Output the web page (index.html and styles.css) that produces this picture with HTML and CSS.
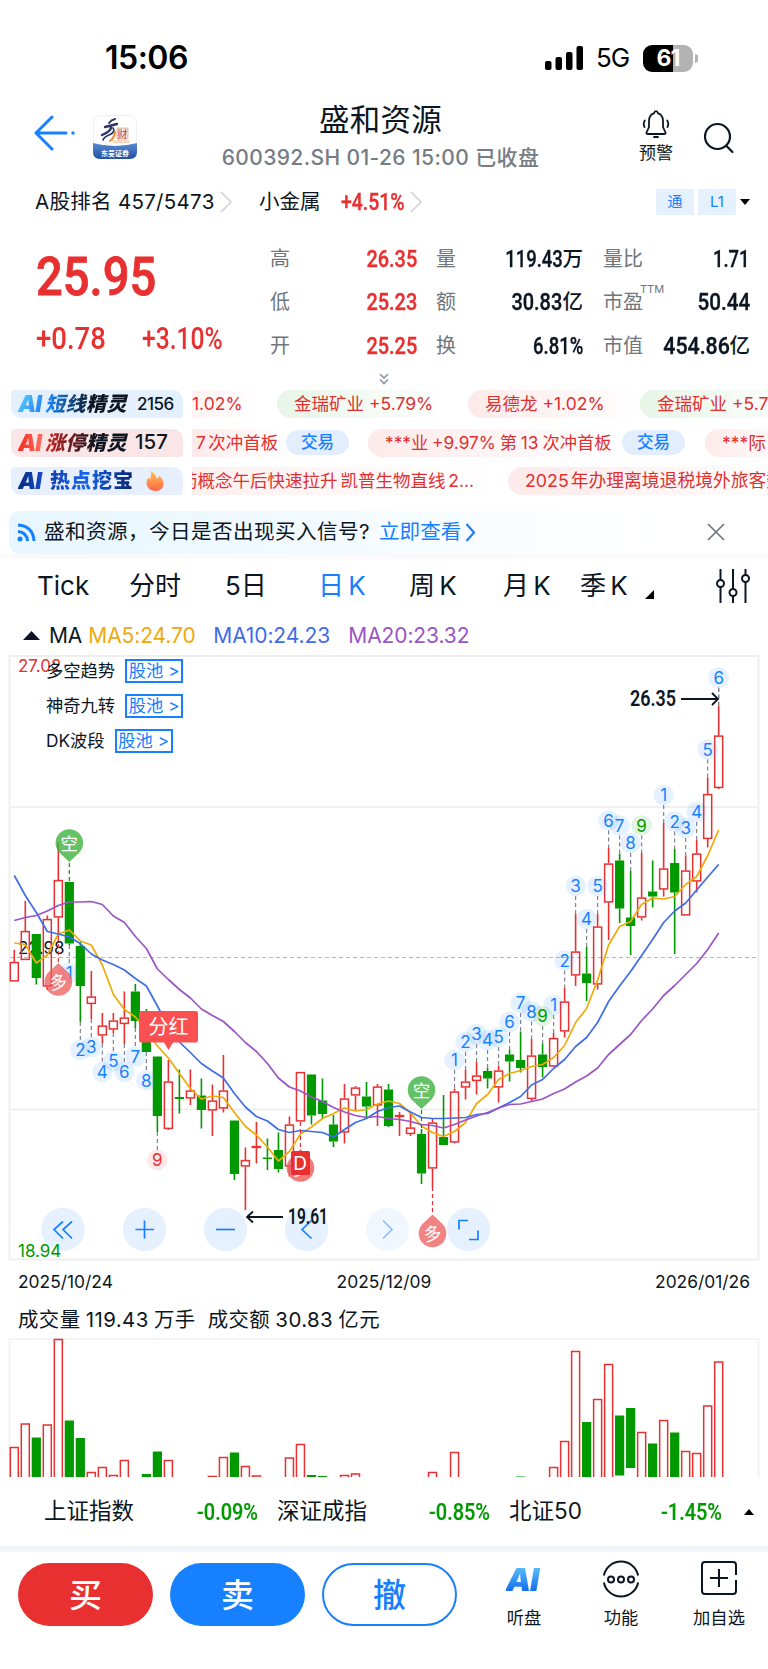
FILE: index.html
```html
<!DOCTYPE html>
<html lang="zh-CN">
<head>
  <meta charset="UTF-8">
  <title>盛和资源 600392.SH</title>
  <link rel="stylesheet" href="styles.css">
</head>
<body>
  <div class="status">
    <div class="clock">15:06</div>
    <div class="status-right">
      <svg width="38" height="24" viewBox="0 0 38 24"><rect x="0" y="15" width="6.5" height="9" rx="2"/><rect x="10.5" y="11" width="6.5" height="13" rx="2"/><rect x="21" y="6" width="6.5" height="18" rx="2"/><rect x="31.500" y="0" width="6.500" height="24" rx="2"/></svg>
      <span class="net">5G</span>
      <span class="battery">61</span>
      <span class="nub"></span>
    </div>
  </div>

  <header class="header">
    <svg class="back" width="42" height="36" viewBox="0 0 42 36" fill="none" stroke="#1780ff" stroke-width="3" stroke-linecap="round" stroke-linejoin="round"><path d="M18 2 L2 18 L18 34 M2 18 H32"/><circle cx="39" cy="18" r="1.7" fill="#1780ff" stroke="none"/></svg>
    <svg class="logo" width="44" height="44" viewBox="0 0 44 44">
      <defs><linearGradient id="lg" x1="0" y1="0" x2="0" y2="1"><stop offset="0" stop-color="#5b8ad2"/><stop offset="1" stop-color="#2250a4"/></linearGradient></defs>
      <rect x=".5" y=".5" width="43" height="43" rx="7" fill="#fff" stroke="#eef0f4"/>
      <path d="M0 28 Q22 34 44 28 V37 Q44 44 37 44 H7 Q0 44 0 37 Z" fill="url(#lg)"/>
      <g fill="none" stroke-linecap="round"><path d="M22 4 Q18 5 16 8" stroke="#2c3566" stroke-width="2"/><path d="M12 12 L24 9 M18 11 Q19 16 9 20" stroke="#2c3566" stroke-width="2.400"/><path d="M20 13 Q23 17 16 20 Q11 22 10 25" stroke="#2c3566" stroke-width="1.700"/><path d="M22 17 Q22 22 17 26" stroke="#f08a2c" stroke-width="2"/></g>
      <rect x="24" y="13" width="11" height="11" rx="1" fill="#f7e4e1" stroke="#d58a80" stroke-width=".6"/>
      <text x="29.500" y="22.500" font-size="10" text-anchor="middle" fill="#b8443a">财</text>
      <text x="28" y="28" font-size="3.500" text-anchor="middle" fill="#f08a2c">DONGWU</text>
      <text x="22" y="41" font-size="7" font-weight="700" text-anchor="middle" fill="#fff">东吴证券</text>
    </svg>
    <div class="title">
      <h1>盛和资源</h1>
      <div class="subtitle">600392.SH 01-26 15:00 已收盘</div>
    </div>
    <div class="alert">
      <svg width="28" height="28" viewBox="0 0 28 28" fill="none" stroke="#0c1622" stroke-width="1.800" stroke-linecap="round" stroke-linejoin="round"><path d="M14 1.200 Q12.500 1.200 12.200 3.200 Q7 5 7 11 V17 L4.500 22.500 Q4 24 5.500 24 H22.500 Q24 24 23.500 22.500 L21 17 V11 Q21 5 15.800 3.200 Q15.500 1.200 14 1.200 Z M12 27 H16 M2.800 10.500 Q.8 13.500 2.500 17 M25.200 10.500 Q27.200 13.500 25.500 17"/></svg>
      <span>预警</span>
    </div>
    <svg class="search" width="32" height="32" viewBox="0 0 32 32" fill="none" stroke="#0c1622" stroke-width="2.200" stroke-linecap="round"><circle cx="14.500" cy="14.500" r="12.500"/><path d="M23.500 24 L29.500 30"/></svg>
  </header>

  <div class="rank">
    <span class="rank-a">A股排名 457/5473</span>
    <svg class="chev" width="12" height="22" viewBox="0 0 12 22"><path d="M1 1 L11 11 L1 21"/></svg>
    <span class="sector">小金属</span>
    <span class="sector-pct"><b class="din d80">+4.51%</b></span>
    <svg class="chev" width="12" height="22" viewBox="0 0 12 22"><path d="M1 1 L11 11 L1 21"/></svg>
    <span class="tag">通</span>
    <span class="tag">L1</span>
    <svg width="10" height="6" viewBox="0 0 10 6"><path d="M0 0 H10 L5 6 Z"/></svg>
  </div>

  <section class="quote">
    <div class="price">
      <div class="last"><b class="din d88">25.95</b></div>
      <div class="change"><span><b class="din d85">+0.78</b></span><span><b class="din d76">+3.10%</b></span></div>
    </div>
    <div class="stats">
      <label>高</label><span class="up"><b class="din">26.35</b></span>
      <label>量</label><span><b class="din d76">119.43</b>万</span>
      <label>量比</label><span><b class="din d76">1.71</b></span>
      <label>低</label><span class="up"><b class="din">25.23</b></span>
      <label>额</label><span><b class="din">30.83</b>亿</span>
      <label>市盈<sup>TTM</sup></label><span><b class="din d85">50.44</b></span>
      <label>开</label><span class="up"><b class="din">25.25</b></span>
      <label>换</label><span><b class="din d76">6.81%</b></span>
      <label>市值</label><span><b class="din d88">454.86</b>亿</span>
    </div>
  </section>
  <div class="expand"><svg width="10" height="12" viewBox="0 0 10 12" fill="none" stroke="#8d96a3" stroke-width="1.600"><path d="M1 1 L5 5 L9 1 M1 6.500 L5 10.500 L9 6.500"/></svg></div>

  <section class="feeds">
    <div class="feed">
      <div class="badge blue"><i class="ai">AI</i><i class="name">短线精灵</i><em class="small">2156</em></div>
      <div class="ticker"><div class="track t1">
        <span class="chip red cut">1.02%</span>
        <span class="chip green">金瑞矿业 +5.79%</span>
        <span class="chip red yi">易德龙 +1.02%</span>
        <span class="chip green">金瑞矿业 +5.79%</span>
      </div></div>
    </div>
    <div class="feed">
      <div class="badge rose"><i class="ai">AI</i><i class="name">涨停精灵</i><em>157</em></div>
      <div class="ticker"><div class="track t2">
        <span class="plain">7 次冲首板</span><span class="trade">交易</span>
        <span class="chip red long">***业 +9.97% 第 13 次冲首板</span><span class="trade">交易</span>
        <span class="chip red last-chip">***际</span>
      </div></div>
    </div>
    <div class="feed">
      <div class="badge navy"><i class="ai">AI</i><i class="name">热点挖宝</i>
        <svg class="fire" width="18" height="20" viewBox="0 0 18 20"><defs><linearGradient id="fg" x1="0" y1="0" x2="0" y2="1"><stop offset="0" stop-color="#ffc552"/><stop offset="1" stop-color="#ff6548"/></linearGradient></defs><path d="M5 0 Q9 2 11 8 Q12 6 13.500 5 Q18 9 17.500 14 Q16 20 9 20 Q1 19 .5 12 Q.5 9 2.500 6.500 L4 8.500 Q5.500 4 5 0Z" fill="url(#fg)"/></svg>
      </div>
      <div class="ticker"><div class="track t3">
        <span class="plain">药概念午后快速拉升 凯普生物直线 2...</span>
        <span class="chip red policy">2025 年办理离境退税境外旅客数量</span>
      </div></div>
    </div>
  </section>

  <div class="notice">
    <svg width="19" height="19" viewBox="0 0 19 19" fill="none" stroke="#1780ff" stroke-width="3"><circle cx="3" cy="16" r="2.500" fill="#1780ff" stroke="none"/><path d="M1 8.500 Q10 9.500 10.500 18 M1 2 Q16 3 17 18"/></svg>
    <span>盛和资源，今日是否出现买入信号?</span>
    <a>立即查看</a>
    <svg width="11" height="19" viewBox="0 0 11 19" fill="none" stroke="#1780ff" stroke-width="2.200"><path d="M1.500 1 L9 9.500 L1.500 18"/></svg>
    <svg class="close" width="18" height="18" viewBox="0 0 18 18" stroke="#6e747c" stroke-width="1.700"><path d="M1 1 L17 17 M17 1 L1 17"/></svg>
  </div>

  <nav class="tabs">
    <span>Tick</span><span>分时</span><span>5日</span><span class="active">日 K</span><span>周 K</span><span>月 K</span><span>季 K</span>
    <svg class="corner" width="9" height="9" viewBox="0 0 9 9"><path d="M9 0 V9 H0 Z"/></svg>
    <svg class="sliders" width="34" height="34" viewBox="0 0 34 34" fill="none" stroke="#0c1622" stroke-width="2"><path d="M4.500 0 V11 M4.500 18 V34 M17 0 V20 M17 27 V34 M29.500 0 V6 M29.500 13 V34"/><circle cx="4.500" cy="14.500" r="3.500"/><circle cx="17" cy="23.500" r="3.500"/><circle cx="29.500" cy="9.500" r="3.500"/></svg>
  </nav>

  <div class="ma">
    <svg width="17" height="9" viewBox="0 0 17 9"><path d="M0 9 L8.500 0 L17 9 Z" fill="#0c1622"/></svg>
    <span>MA</span><span class="ma5">MA5:24.70</span><span class="ma10">MA10:24.23</span><span class="ma20">MA20:23.32</span>
  </div>

  <div class="chart">
    <svg id="kline" width="768" height="612" viewBox="0 652 768 612"></svg>
    <div class="pools">
      <div>多空趋势<a>股池 &gt;</a></div>
      <div>神奇九转<a>股池 &gt;</a></div>
      <div>DK波段<a>股池 &gt;</a></div>
    </div>
  </div>
  <div class="dates"><span>2025/10/24</span><span>2025/12/09</span><span>2026/01/26</span></div>

  <div class="volume-label"><span>成交量 119.43 万手</span><span>成交额 30.83 亿元</span></div>
  <svg id="volume" class="volume" width="768" height="139" viewBox="0 1337.500 768 139"></svg>

  <div class="indices">
    <span>上证指数</span><b class="din">-0.09%</b>
    <span>深证成指</span><b class="din">-0.85%</b>
    <span>北证50</span><b class="din">-1.45%</b>
    <svg width="10" height="6" viewBox="0 0 10 6"><path d="M0 6 L5 0 L10 6 Z"/></svg>
  </div>

  <footer class="actions">
    <button class="btn buy">买</button>
    <button class="btn sell">卖</button>
    <button class="btn cancel">撤</button>
    <div class="tool listen"><i>AI</i><span>听盘</span></div>
    <div class="tool func">
      <svg width="38" height="38" viewBox="0 0 38 38" fill="none" stroke="#0c1622" stroke-width="2"><path d="M1.850 15.500 A17.500 17.500 0 0 1 36.150 15.500 M1.850 22.500 A17.500 17.500 0 0 0 36.150 22.500"/><circle cx="9" cy="19.500" r="3"/><circle cx="19" cy="19.500" r="3"/><circle cx="29" cy="19.500" r="3"/></svg>
      <span>功能</span>
    </div>
    <div class="tool add">
      <svg width="36" height="36" viewBox="0 0 36 36" fill="none" stroke="#0c1622" stroke-width="2"><path d="M35 15 V5 Q35 2 32 2 H4 Q1 2 1 5 V31 Q1 34 4 34 H32 Q35 34 35 31 V20 M18 9 V27 M9 18 H27"/></svg>
      <span>加自选</span>
    </div>
  </footer>
  <script src="chart.js"></script>
</body>
</html>
```
FILE: styles.css
```css
* {
  box-sizing: border-box;
}

body {
  margin: 0;
  width: 768px;
  height: 1669px;
  overflow: hidden;
  background: #fff;
  color: #0c1622;
  font-family: Inter, "Noto Sans CJK SC", sans-serif;
  font-size: 20px;
  line-height: 1;
  white-space: nowrap;
}

svg {
  display: block;
  flex: none;
}

h1 {
  margin: 0;
}

/* narrow figures for prices */
.din {
  display: inline-block;
  font-family: Roboto, sans-serif;
  font-weight: 500;
  font-size: 24px;
  transform: scaleX(.83);
  transform-origin: right center;
  -webkit-text-stroke: .35px;
}
.d76 { transform: scaleX(.77); }
.d80 { transform: scaleX(.81); }
.d85 { transform: scaleX(.86); }
.d88 { transform: scaleX(.89); }

/* status bar */
.status {
  height: 101px;
  padding: 15px 70px 0 105px;
  display: flex;
  justify-content: space-between;
  align-items: center;
  color: #000;
}
.clock {
  font-size: 32px;
  font-weight: 600;
  letter-spacing: -.5px;
}
.status-right {
  display: flex;
  align-items: center;
}
.net {
  width: 46px;
  padding-left: 13px;
  font-size: 26px;
  letter-spacing: -1px;
}
.battery {
  margin-left: 14px;
  width: 50px;
  height: 27px;
  border-radius: 9px;
  background: linear-gradient(90deg, #000 60%, #b3b3b3 60%);
  color: #fff;
  font-size: 23px;
  font-weight: 700;
  line-height: 27px;
  text-align: center;
  letter-spacing: -1px;
}
.nub {
  margin-left: 2px;
  width: 3px;
  height: 9px;
  border-radius: 0 4px 4px 0;
  background: #b3b3b3;
}

/* header */
.header {
  height: 78px;
  display: flex;
  align-items: flex-start;
}
.back {
  margin: 14px 0 0 34px;
}
.logo {
  margin: 14px 0 0 17px;
  width: 44px;
}
.title {
  width: 487px;
  padding-top: 2px;
  text-align: center;
}
.title h1 {
  font-size: 30.5px;
  font-weight: 400;
  line-height: 34px;
  letter-spacing: .3px;
}
.subtitle {
  margin-top: 10px;
  color: #767c83;
  font-size: 21px;
  line-height: 21px;
  font-weight: 500;
  letter-spacing: .4px;
}
.alert {
  width: 60px;
  margin: 9px 0 0 2px;
  display: flex;
  flex-direction: column;
  align-items: center;
  font-size: 17px;
}
.alert span {
  margin-top: 7px;
}
.search {
  margin: 21px 0 0 17px;
}

/* rank row */
.rank {
  height: 46px;
  display: flex;
  align-items: center;
}
.rank-a {
  width: 185px;
  margin-left: 35px;
  font-size: 20.5px;
  letter-spacing: .3px;
}
.chev path {
  fill: none;
  stroke: #d0d3d8;
  stroke-width: 1.6px;
}
.sector {
  margin-left: 27px;
  width: 82px;
  font-size: 20.5px;
}
.sector-pct {
  width: 69px;
  color: #e83030;
}
.sector-pct .din,
.price .din {
  transform-origin: left center;
}
.rank .chev + .tag {
  margin-left: 234px;
}
.tag {
  width: 38px;
  height: 26px;
  margin-right: 4px;
  background: #e6f1fe;
  color: #1780ff;
  font-size: 15px;
  line-height: 26px;
  text-align: center;
}

/* quote */
.quote {
  height: 144px;
  display: flex;
}
.price {
  width: 270px;
  padding: 26px 0 0 36px;
  color: #e83030;
}
.last .din {
  font-size: 53px;
  line-height: 52px;
  -webkit-text-stroke: .8px;
}
.change {
  display: flex;
  margin-top: 19px;
}
.change span {
  width: 106px;
}
.change .din {
  font-size: 32px;
  line-height: 32px;
  -webkit-text-stroke: 0;
}
.stats {
  width: 480px;
  padding-top: 12px;
  display: grid;
  grid-template-columns: 60px 87px 66px 100px 40px 127px;
  grid-template-rows: repeat(3, 43.5px);
  align-items: center;
}
.stats label {
  color: #70767d;
  font-size: 20px;
}
.stats label:nth-of-type(3n+2) {
  padding-left: 19px;
}
.stats label:nth-of-type(3n) {
  padding-left: 20px;
}
.stats span {
  display: flex;
  justify-content: flex-end;
  align-items: center;
  font-size: 20.5px;
  font-weight: 500;
}
.stats .up {
  color: #e83030;
}
.stats sup {
  position: absolute;
  margin-top: -8px;
  margin-left: -3px;
  font-size: 11px;
}
.expand {
  height: 21px;
  padding: 4px 0 0 379px;
}

/* AI feeds */
.feed {
  height: 38.5px;
  display: flex;
}
.badge {
  width: 172px;
  height: 28px;
  margin-left: 11px;
  padding-left: 7px;
  display: flex;
  align-items: center;
  border-radius: 4px 10px 4px 10px;
  background: #e5f0fe;
}
.badge i {
  font-weight: 900;
  font-size: 20px;
  line-height: 26px;
  color: transparent;
  -webkit-background-clip: text;
  background-clip: text;
}
.badge .ai {
  width: 27px;
  font-size: 23px;
  letter-spacing: -1px;
  background-image: linear-gradient(120deg, #60d8ff, #1670f0);
}
.badge .name {
  width: 86px;
  letter-spacing: .5px;
  background-image: linear-gradient(90deg, #1e8dff, #0b1420 55%);
}
.badge em {
  margin-left: 4px;
  font-style: normal;
  font-size: 20.5px;
  font-weight: 500;
}
.badge .small {
  margin-left: 6px;
  font-size: 17px;
  letter-spacing: -.5px;
}
.rose {
  background: #fae6e7;
}
.rose .ai {
  background-image: linear-gradient(90deg, #f52d20, #ff7468);
}
.rose .name {
  background-image: linear-gradient(90deg, #d52824, #0b1420 60%);
}
.navy {
  background: #e7eefc;
}
.navy .ai {
  width: 26px;
  margin-right: 6px;
  background-image: linear-gradient(90deg, #082b80, #174dcc);
}
.navy .name {
  font-style: normal;
  letter-spacing: 1px;
  background-image: linear-gradient(90deg, #123eae, #1765f0 40%, #061f67);
}
.fire {
  margin-left: 10px;
}
.ticker {
  width: 576px;
  height: 28px;
  margin-left: 9px;
  overflow: hidden;
}
.track {
  display: flex;
  align-items: center;
  height: 28px;
  color: #df3030;
  font-size: 17.5px;
}
.chip,
.plain {
  flex: none;
  height: 28px;
  line-height: 28px;
}
.chip {
  border-radius: 14px 0 0 14px;
  padding-left: 17px;
}
.red,
.plain {
  background: linear-gradient(90deg, #fdeaea, #fff);
}
.green {
  width: 191px;
  background: linear-gradient(90deg, #e7f5e7, #fff 90%);
}
.cut {
  width: 85px;
  padding-left: 0;
  border-radius: 0;
  background: linear-gradient(90deg, #fff3f3, #fff 80%);
}
.yi {
  width: 172px;
}
.t2 .plain {
  width: 94px;
  padding-left: 4px;
  word-spacing: -2.5px;
}
.trade {
  flex: none;
  width: 63px;
  height: 25px;
  border-radius: 13px;
  background: #e2eefd;
  color: #1780ff;
  font-size: 16.5px;
  font-weight: 500;
  line-height: 25px;
  text-align: center;
}
.long {
  width: 254px;
  margin-left: 19px;
  font-size: 17.3px;
  word-spacing: -1px;
}
.last-chip {
  margin-left: 20px;
  width: 90px;
}
.t3 .plain {
  width: 317px;
  margin-left: -12px;
  background: linear-gradient(90deg, #ffefef, #fff);
  word-spacing: -2px;
}
.policy {
  margin-left: 11px;
  width: 290px;
  font-size: 17.8px;
  word-spacing: -3px;
}

/* notice */
.notice {
  height: 43px;
  margin: 5px 0 0 9px;
  padding-left: 8px;
  display: flex;
  align-items: center;
  border-radius: 11px 0 0 11px;
  background: linear-gradient(90deg, #e7f6ff, #f4fbff 45%, #fff 85%);
  font-size: 20.6px;
}
.notice span {
  width: 335px;
  margin-left: 8px;
  letter-spacing: .4px;
}
.notice a {
  width: 86px;
  color: #1780ff;
}
.notice .close {
  margin-left: 231px;
}

/* period tabs */
.tabs {
  height: 60px;
  border-top: 5px solid #fafafa;
  padding: 0 0 0 37px;
  display: grid;
  grid-template-columns: 92px 96px 93px 91px 94px 77px 65px 71px 34px;
  align-items: center;
  font-size: 26px;
  word-spacing: -3px;
}
.tabs .active {
  color: #1780ff;
}
.corner {
  margin-top: 17px;
}

.ma {
  height: 38px;
  padding: 6px 0 0 23px;
  display: flex;
  align-items: center;
  font-size: 21px;
  letter-spacing: -.1px;
}
.ma span { margin-left: 9px; }
.ma .ma5 { width: 107px; margin-left: 6px; color: #efa90a; }
.ma .ma10 { width: 117px; margin-left: 18px; color: #3f6ce8; }
.ma .ma20 { margin-left: 18px; color: #9955c4; }

/* candles */
.chart {
  position: relative;
  height: 612px;
}
.chart text {
  font-family: Inter, "Noto Sans CJK SC", sans-serif;
}
.chart .din-text {
  font-family: Roboto, sans-serif;
  font-weight: 600;
}
.pools {
  position: absolute;
  top: 7px;
  left: 46px;
  font-size: 17.3px;
}
.pools div {
  height: 35px;
  display: flex;
  align-items: flex-start;
  line-height: 24px;
}
.pools a {
  width: 58px;
  height: 24px;
  margin-left: 10px;
  border: 2px solid #1780ff;
  color: #1780ff;
  line-height: 20px;
  text-align: center;
}

.dates {
  height: 36px;
  padding: 0 18px;
  display: flex;
  justify-content: space-between;
  align-items: center;
  font-size: 17.4px;
}
.volume-label {
  height: 38px;
  padding: 3px 18px 0;
  display: flex;
  gap: 12px;
  align-items: center;
  font-size: 20.4px;
  letter-spacing: .45px;
  word-spacing: -1px;
}

/* index strip */
.indices {
  height: 69px;
  padding: 1px 0 0 44px;
  display: grid;
  grid-template-columns: 130px 84px 149px 83px 150px 82px 41px;
  align-items: center;
  font-size: 22.5px;
}
.indices span:nth-of-type(n+2) {
  padding-left: 19px;
}
.indices .din {
  color: #009a00;
  text-align: right;
  -webkit-text-stroke: .2px;
}
.indices svg {
  margin-left: 22px;
}

/* bottom bar */
.actions {
  height: 124px;
  border-top: 6px solid #f3f5fb;
  padding: 11px 0 0 18px;
  display: flex;
  align-items: flex-start;
}
.btn {
  width: 135px;
  height: 63px;
  margin: 0 17px 0 0;
  padding: 0 0 3px;
  border: none;
  border-radius: 32px;
  color: #fff;
  font-family: inherit;
  font-size: 33px;
  font-weight: 500;
}
.buy { background: #e83030; }
.sell { background: #1780ff; }
.cancel {
  background: #fff;
  border: 2px solid #1780ff;
  color: #1780ff;
}
.tool {
  height: 71px;
  display: flex;
  flex-direction: column;
  align-items: center;
  justify-content: space-between;
  width: 98px;
  margin-top: -3px;
  padding-bottom: 4px;
  font-size: 17.3px;
}
.listen {
  padding-left: 2px;
}
.tool i {
  padding-right: 4px;
  margin-top: 3px;
  font-size: 32px;
  font-weight: 900;
  letter-spacing: -1px;
  line-height: 34px;
  color: transparent;
  background: linear-gradient(#64ccff, #1671ee 80%);
  -webkit-background-clip: text;
  background-clip: text;
}
```
FILE: chart.js
```javascript
const RED = '#e83030', GREEN = '#009a00', BLUE = '#1780ff';
const x = i => 14.3 + i * 11.006;

// [color, high, body top, body bottom, low] in chart units
const candles = [
  ['r',950,962,981.5,981.5],['r',901,931,960,960],['g',934,934,978,984.5],['r',915.5,919,986.5,990],['r',842,880,917.5,937],
  ['g',882,882,943.5,945],['g',942,946,986,1022],['r',971,996.5,1004,1019],['r',1013,1025.5,1035.5,1043.5],['r',1013,1020.5,1029.5,1033],
  ['r',991.5,1017.5,1024,1044],['g',984,991.5,1021,1028],['g',1009,1013,1052,1052],['g',1056.5,1056.5,1116,1132],['r',1060,1081.5,1129,1130],
  ['g',1069.5,1097,1099,1113.5],['r',1069.5,1090.5,1098.5,1105],['g',1078.5,1095.5,1110,1128.5],['r',1084.5,1100.5,1110.5,1136],['r',1055,1090.5,1108.5,1112.5],
  ['g',1120.5,1120.5,1174,1180],['r',1147.5,1160,1166.5,1210],['r',1122,1146,1148,1163.5],['g',1138.5,1157.5,1159,1170],['g',1132.5,1150,1169,1172.5],
  ['r',1116.5,1124.5,1166.5,1176.5],['r',1072,1072,1121.5,1121.5],['g',1074.5,1074.5,1115.5,1124.5],['g',1078.5,1100.5,1114,1118.5],['g',1115,1124.5,1141.5,1147],
  ['r',1084,1098.5,1132.5,1143.5],['r',1086,1087.5,1095.5,1110.5],['g',1082,1096.5,1106.5,1117.5],['r',1084,1086.5,1105.5,1126],['g',1084,1089.5,1126,1127],
  ['r',1112,1115,1116,1136],['r',1113,1127.5,1134,1136],['g',1129,1134,1173.5,1184],['r',1119,1122.5,1168.5,1187],['g',1095,1137,1145,1145],
  ['r',1088.5,1091.5,1142.5,1143.5],['r',1069.5,1081.5,1087.5,1099.5],['r',1061.5,1075.5,1081,1094.5],['g',1067.5,1071,1078.5,1088.5],['r',1065.5,1070.5,1087.5,1102.5],
  ['g',1050,1054.5,1061.5,1081.5],['g',1031.5,1060,1068,1072.5],['r',1039,1055.5,1099,1101],['g',1043.5,1054.5,1067,1077.5],['r',1033,1038,1066.5,1067],
  ['r',988,1001.5,1031.5,1037.5],['r',914,951.5,975.5,986],['g',946.5,973.5,983,1001],['r',914,926.5,984.5,989.5],['r',848,863.5,902.5,940],
  ['g',853.5,860.5,908.5,923],['g',870.5,917.5,926,955],['r',853,897.5,917.5,920.5],['g',860.5,891.5,896.5,907.5],['r',823,868.5,889.5,896.5],
  ['g',849,863,892.5,954],['r',855.5,870.5,915.5,915.5],['r',840,853.5,881.5,892.5],['r',777.5,794,839,847.5],['r',705.5,735.5,788,789]
];

const ma5 = [943,944.5,963,955,934,930,941,945,965,994.5,1009.5,1017,1030,1046,1058,1073.5,1088.5,1099,1096,1097.5,1112.5,1126.5,1135,1147,1161,1151.5,1134,1127,1118.5,1113.5,1108,1111,1109.5,1104,1101,1103.5,1113,1126,1132.5,1136.5,1131.5,1122.5,1103.5,1094.5,1079.5,1073.5,1070.5,1066.5,1064.5,1057.5,1045.5,1022.5,1008.5,980,945,926.5,921.5,904.5,898,899,896.5,884.5,876.5,855.5,830];
const ma10 = [875.5,895.5,912.5,931.5,934,937,943.5,954,960,964.5,970,978.5,986,1006,1027,1042,1052.5,1063.5,1071,1078,1093.5,1107,1116.5,1121,1129.5,1132.5,1130.5,1131.5,1132.5,1137,1129.5,1122.5,1118.5,1111.5,1107.5,1106,1112,1117.5,1118.5,1118.5,1118,1117.5,1114.5,1113.5,1108,1102.5,1096.5,1085,1079.5,1068.5,1059.5,1046.5,1037.5,1022.5,1001.5,986,971.5,955.5,939.5,922.5,911,903,890,877,864.5];
const ma20 = [920.5,917.5,915.5,911,905.5,902,902,901.5,904.5,916,922.5,936.5,948.5,969,979.5,989.5,998,1009,1015.5,1021.5,1031.5,1042.5,1051.5,1063.5,1078,1087,1091,1097,1101.5,1107.5,1112,1115.5,1117.5,1116.5,1118.5,1119.5,1121.5,1124.5,1125.5,1128,1124.5,1120,1116,1112.5,1108,1104.5,1104,1101.5,1099,1093.5,1089,1082,1076,1068,1054.5,1044.5,1034.5,1020.5,1009,995.5,985.5,974.5,963.5,949.5,933];

// nine-turn counters: [index, count, y]
const turns = [[5,1,973],[6,2,1050],[7,3,1047],[8,4,1072],[9,5,1061],[10,6,1072],[11,7,1056.5],[12,8,1080.5],[13,9,1160],
  [40,1,1060],[41,2,1042],[42,3,1034],[43,4,1040],[44,5,1037],[45,6,1022],[46,7,1003],[47,8,1011.5],[48,9,1016],[49,1,1005],
  [50,2,960.5],[51,3,886],[52,4,919],[53,5,886],[54,6,820.5],[55,7,825.5],[56,8,843],[57,9,825.5],
  [59,1,795],[60,2,821.5],[61,3,828],[62,4,812],[63,5,749.5],[64,6,677.5]];

// [index, top of the bar, color]
const volumes = [[0,1447],[1,1423.5],[2,1437,'g'],[3,1424.5],[4,1339],[5,1420,'g'],[6,1437.5,'g'],[7,1472],[8,1467],[9,1475],[10,1460],[12,1473.5,'g'],[13,1451,'g'],[14,1460],
  [18,1476],[19,1457],[20,1452,'g'],[21,1466],[22,1475.5],[25,1457.5],[26,1444],[27,1474.5,'g'],[28,1475.5,'g'],[30,1475],[31,1473.5],[38,1472],[40,1452],[46,1476,'g'],
  [49,1467],[50,1441],[51,1351],[52,1421.5,'g'],[53,1399],[54,1364],[55,1415,'g'],[56,1407.5,'g'],[57,1432],[58,1443,'g'],[59,1420],[60,1432,'g'],[61,1451],[62,1453],[63,1405.5],[64,1361.5]];

const text = (tx, y, s, size, color, extra = '') =>
  `<text x="${tx}" y="${y}" font-size="${size}" fill="${color}" ${extra}>${s}</text>`;
const dash = (cx, y1, y2, color = '#7d8490') =>
  `<path d="M${cx} ${y1} V${y2}" stroke="${color}" stroke-width="1.2" stroke-dasharray="4 3"/>`;
const line = (points, color) =>
  `<polyline points="${points.map((y, i) => x(i).toFixed(1) + ',' + y).join(' ')}" fill="none" stroke="${color}" stroke-width="1.7" stroke-linejoin="round"/>`;

let out = `<rect x="9.5" y="656" width="749" height="603.5" fill="none" stroke="#efefef" stroke-width="2"/>
  <path d="M10 807 H758 M10 1109.5 H758" stroke="#ebebeb" stroke-width="1.5"/>
  <path d="M10 957.5 H758" stroke="#b9b9b9" stroke-dasharray="4 3"/>`;
out += text(18, 672, '27.02', 17, RED);
out += text(18, 954, '22.98', 17, '#0c1622');

// zoom and scroll buttons
const glyphs = [
  [63, 'M63 -8 L54 0 L63 9 M72 -8 L63 0 L72 9'],
  [144.5, 'M135.5 0 H154 M144.5 -9 V9'],
  [225.5, 'M216 0 H235'],
  [306.5, 'M311.5 -9 L302 0 L311.5 9'],
  [387.5, 'M383 -9 L392 0 L383 9'],
  [468.5, 'M459 0 V-9 H468 M469 10 H478 V1']
];
glyphs.forEach(([cx, d], i) => {
  out += `<g opacity="${i === 4 ? .5 : 1}"><circle cx="${cx}" cy="1229.5" r="21.7" fill="#e5f1fe"/><path transform="translate(0 1229.5)" d="${d}" fill="none" stroke="${BLUE}" stroke-width="1.7"/></g>`;
});
out += text(18, 1256.5, '18.94', 17, GREEN);

candles.forEach(([c, high, top, bottom, low], i) => {
  const color = c === 'r' ? RED : GREEN;
  out += `<path d="M${x(i)} ${high} V${top} M${x(i)} ${bottom} V${low}" stroke="${color}" stroke-width="1.6"/>`;
  out += c === 'r'
    ? `<rect x="${x(i) - 4}" y="${top + .6}" width="8" height="${Math.max(bottom - top - 1.2, .8)}" fill="none" stroke="${RED}" stroke-width="1.5"/>`
    : `<rect x="${x(i) - 4.6}" y="${top}" width="9.2" height="${bottom - top}" fill="${GREEN}"/>`;
});
out += dash(x(64), 688, 705) + line(ma5, '#efaa08') + line(ma10, '#3f6ce8') + line(ma20, '#9955c4');

turns.forEach(([i, n, y]) => {
  const color = n < 9 ? BLUE : i < 20 ? RED : GREEN;
  out += i < 20 ? dash(x(i), candles[i][4], y - 10) : dash(x(i), y + 10, candles[i][1]);
  out += `<circle cx="${x(i)}" cy="${y}" r="10.3" fill="${color}" opacity=".11"/>`;
  out += text(x(i), y + 6, n, 17, color, 'text-anchor="middle"');
});

// long / short pins
const pin = (cx, cy, label, color, up) => {
  const t = up ? -1 : 1;
  return `<path d="M${cx} ${cy + t * 19} L${cx - 10} ${cy + t * 9.5} A13.8 13.8 0 1 ${up ? 0 : 1} ${cx + 10} ${cy + t * 9.5} Z" fill="${color}"/>`
    + text(cx, cy + 6.5, label, 17.5, '#fff', `text-anchor="middle"${up ? ` transform="rotate(-10 ${cx} ${cy})"` : ''}`);
};
out += dash(x(5), 863, 882, GREEN) + pin(x(5), 843, '空', 'rgba(62,178,62,.8)', false);
out += dash(x(4), 937, 962, RED) + pin(x(4), 982, '多', 'rgba(238,90,90,.75)', true);
out += dash(x(37), 1110, 1129, GREEN) + pin(x(37), 1090, '空', 'rgba(62,178,62,.8)', false);
out += dash(x(38), 1187, 1214, RED) + pin(x(38), 1233.5, '多', 'rgba(238,90,90,.75)', true);
out += dash(x(26), 1122, 1150, RED) + pin(x(26), 1168, '多', 'rgba(238,90,90,.8)', true);
out += `<rect x="291" y="1151" width="19" height="24" rx="1.5" fill="${RED}"/>` + text(300, 1169.5, 'D', 19, '#fff', 'text-anchor="middle"');
out += `<path d="M141 1011 H196 Q198 1011 198 1013 V1040 Q198 1042.5 196 1042.5 H173 L168.5 1050 L164 1042.5 H141 Q139 1042.5 139 1040 V1013 Q139 1011 141 1011Z" fill="#fb5052"/>`;
out += text(168.5, 1034, '分红', 20, '#fff', 'text-anchor="middle"');

// high / low marks
out += text(630, 706, '26.35', 21.5, '#0c1622', 'class="din-text" textLength="46" lengthAdjust="spacingAndGlyphs"');
out += `<path d="M681 699 H718 M712 693 L718 699 L712 705 M283 1217 H247 M253 1211.5 L247 1217 L253 1222.5" fill="none" stroke="#0c1622" stroke-width="1.8"/>`;
out += text(288, 1224, '19.61', 21.5, '#0c1622', 'class="din-text" textLength="40" lengthAdjust="spacingAndGlyphs"');
document.getElementById('kline').innerHTML = out;

let vol = '<path d="M9.5 1480 V1338.5 H758.5 V1480" fill="none" stroke="#efefef" stroke-width="1.5"/>';
volumes.forEach(([i, top, c]) => {
  vol += c
    ? `<rect x="${x(i) - 4.6}" y="${top}" width="9.2" height="60" fill="${GREEN}"/>`
    : `<rect x="${x(i) - 4}" y="${top}" width="8" height="200" fill="#fff" stroke="${RED}" stroke-width="1.5"/>`;
});
document.getElementById('volume').innerHTML = vol;
```
